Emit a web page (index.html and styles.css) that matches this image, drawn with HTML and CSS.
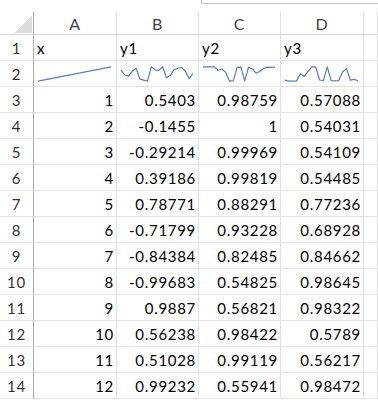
FILE: index.html
```html
<!DOCTYPE html>
<html lang="en">
<head>
  <meta charset="UTF-8">
  <title>Sparklines - Sheet1</title>
  <link rel="stylesheet" href="styles.css">
</head>
<body>
  <div class="formula-edge"><div class="formula-box"></div></div>

  <div class="sheet">
    <div class="row head">
      <div class="corner"></div>
      <div class="col-h">A</div>
      <div class="col-h">B</div>
      <div class="col-h">C</div>
      <div class="col-h">D</div>
      <div class="col-h"></div>
    </div>
    <div class="row">
      <div class="row-h">1</div>
      <div class="cell">x</div>
      <div class="cell">y1</div>
      <div class="cell">y2</div>
      <div class="cell">y3</div>
      <div class="cell"></div>
    </div>
    <div class="row">
      <div class="row-h">2</div>
      <div class="cell spark-cell"><svg class="spark" data-values="1,2,3,4,5,6,7,8,9,10,11,12,13,14,15,16,17,18,19,20"></svg></div>
      <div class="cell spark-cell"><svg class="spark" data-values="0.5403,-0.1455,-0.29214,0.39186,0.78771,-0.71799,-0.84384,-0.99683,0.9887,0.56238,0.51028,0.99232,-0.5176,-0.1804,0.5982,0.804,0.9,0.3587,-0.6192,0.0657"></svg></div>
      <div class="cell spark-cell"><svg class="spark" data-values="0.98759,1,0.99969,0.99819,0.88291,0.93228,0.82485,0.54825,0.56821,0.98422,0.99119,0.55941,0.99,0.93,0.8,0.86,0.95,0.99,0.98,0.99"></svg></div>
      <div class="cell spark-cell"><svg class="spark" data-values="0.57088,0.54031,0.54109,0.54485,0.77236,0.68928,0.84662,0.98645,0.98322,0.5789,0.56217,0.98472,0.56,0.55,0.56,0.83,0.93,0.57,0.6,0.55"></svg></div>
      <div class="cell"></div>
    </div>
    <div class="row">
      <div class="row-h">3</div>
      <div class="cell num">1</div><div class="cell num">0.5403</div><div class="cell num">0.98759</div><div class="cell num">0.57088</div><div class="cell"></div>
    </div>
    <div class="row">
      <div class="row-h">4</div>
      <div class="cell num">2</div><div class="cell num">-0.1455</div><div class="cell num">1</div><div class="cell num">0.54031</div><div class="cell"></div>
    </div>
    <div class="row">
      <div class="row-h">5</div>
      <div class="cell num">3</div><div class="cell num">-0.29214</div><div class="cell num">0.99969</div><div class="cell num">0.54109</div><div class="cell"></div>
    </div>
    <div class="row">
      <div class="row-h">6</div>
      <div class="cell num">4</div><div class="cell num">0.39186</div><div class="cell num">0.99819</div><div class="cell num">0.54485</div><div class="cell"></div>
    </div>
    <div class="row">
      <div class="row-h">7</div>
      <div class="cell num">5</div><div class="cell num">0.78771</div><div class="cell num">0.88291</div><div class="cell num">0.77236</div><div class="cell"></div>
    </div>
    <div class="row">
      <div class="row-h">8</div>
      <div class="cell num">6</div><div class="cell num">-0.71799</div><div class="cell num">0.93228</div><div class="cell num">0.68928</div><div class="cell"></div>
    </div>
    <div class="row">
      <div class="row-h">9</div>
      <div class="cell num">7</div><div class="cell num">-0.84384</div><div class="cell num">0.82485</div><div class="cell num">0.84662</div><div class="cell"></div>
    </div>
    <div class="row">
      <div class="row-h">10</div>
      <div class="cell num">8</div><div class="cell num">-0.99683</div><div class="cell num">0.54825</div><div class="cell num">0.98645</div><div class="cell"></div>
    </div>
    <div class="row">
      <div class="row-h">11</div>
      <div class="cell num">9</div><div class="cell num">0.9887</div><div class="cell num">0.56821</div><div class="cell num">0.98322</div><div class="cell"></div>
    </div>
    <div class="row">
      <div class="row-h">12</div>
      <div class="cell num">10</div><div class="cell num">0.56238</div><div class="cell num">0.98422</div><div class="cell num">0.5789</div><div class="cell"></div>
    </div>
    <div class="row">
      <div class="row-h">13</div>
      <div class="cell num">11</div><div class="cell num">0.51028</div><div class="cell num">0.99119</div><div class="cell num">0.56217</div><div class="cell"></div>
    </div>
    <div class="row">
      <div class="row-h">14</div>
      <div class="cell num">12</div><div class="cell num">0.99232</div><div class="cell num">0.55941</div><div class="cell num">0.98472</div><div class="cell"></div>
    </div>
  </div>

  <script>
    // draw each sparkline from its data-values
    document.querySelectorAll('.spark').forEach(svg => {
      const vals = svg.dataset.values.split(',').map(Number);
      const box = svg.getBoundingClientRect();
      const min = Math.min(...vals);
      const max = Math.max(...vals);
      const left = 4, right = box.width - 5;
      const top = 5.8, bottom = 20.2;
      const step = (right - left) / (vals.length - 1);

      const pts = vals.map((v, i) => {
        const x = left + i * step;
        const y = top + (max - v) / (max - min) * (bottom - top);
        return x.toFixed(1) + ',' + y.toFixed(1);
      });

      svg.setAttribute('viewBox', `0 0 ${box.width} ${box.height}`);
      svg.innerHTML = `<polyline points="${pts.join(' ')}" />`;
    });
  </script>
</body>
</html>
```

FILE: styles.css
```css
body {
  margin: 0;
  width: 378px;
  height: 400px;
  overflow: hidden;
  background: #fff;
  font-family: Lato, 'Open Sans', sans-serif;
  font-size: 15px;
  letter-spacing: 0.7px;
  color: #000;
}

.formula-edge {
  height: 12px;
}
.formula-box {
  margin-left: 201px;
  height: 3px;
  border-left: 1px solid #c6c6c6;
  border-bottom: 1px solid #c6c6c6;
}

.row {
  display: grid;
  grid-template-columns: 34px 83px 82px 82px 83px 1fr;
  height: 26px;
}
.row.head {
  height: 23px;
}

.cell,
.col-h,
.row-h,
.corner {
  box-sizing: border-box;
  border-right: 1px solid #e1e1e1;
  border-bottom: 1px solid #e1e1e1;
  display: flex;
  align-items: center;
  overflow: hidden;
  white-space: nowrap;
}

.cell {
  padding: 1px 2px 0 3px;
}
.num {
  justify-content: flex-end;
  padding-right: 2px;
}

.col-h {
  justify-content: center;
  font-size: 16px;
  color: #444;
  border-bottom-color: #d4d4d4;
  padding-top: 1px;
}

.row-h {
  justify-content: center;
  color: #333;
  border-right-color: #ababab;
  padding-top: 1px;
  letter-spacing: 0.9px;
}

.corner {
  border-right-color: #ababab;
  border-bottom-color: #d4d4d4;
  background: linear-gradient(to bottom right, transparent 50%, #dcdcdc 50%) no-repeat;
  background-size: 18px 18px;
  background-position: right 1px bottom 1px;
}

.spark-cell {
  padding: 0;
}
.spark {
  display: block;
  width: 100%;
  height: 100%;
}
.spark polyline {
  fill: none;
  stroke: #5a7dba;
  stroke-width: 1.2;
  stroke-linejoin: round;
}
```
